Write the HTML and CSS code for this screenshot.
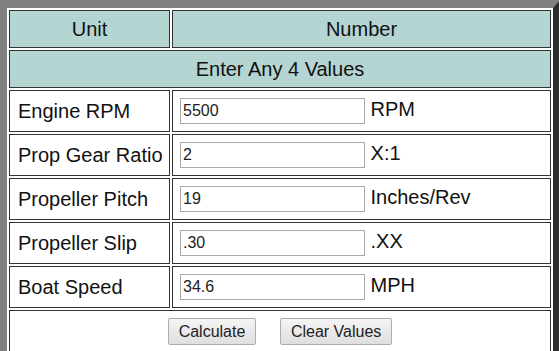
FILE: index.html
```html
<!DOCTYPE html>
<html>
  <head>
    <link rel="stylesheet" href="styles.css">
  </head>
  <body>
    <form>
      <table class="calc">
        <tr>
          <th class="head unit-col">Unit</th>
          <th class="head">Number</th>
        </tr>
        <tr>
          <td class="head" colspan="2">Enter Any 4 Values</td>
        </tr>
        <tr>
          <td class="label">Engine RPM</td>
          <td class="value"><input type="text" value="5500"> RPM</td>
        </tr>
        <tr>
          <td class="label">Prop Gear Ratio</td>
          <td class="value"><input type="text" value="2"> X:1</td>
        </tr>
        <tr>
          <td class="label">Propeller Pitch</td>
          <td class="value"><input type="text" value="19"> Inches/Rev</td>
        </tr>
        <tr>
          <td class="label">Propeller Slip</td>
          <td class="value"><input type="text" value=".30"> .XX</td>
        </tr>
        <tr>
          <td class="label">Boat Speed</td>
          <td class="value"><input type="text" value="34.6"> MPH</td>
        </tr>
        <tr>
          <td class="actions" colspan="2">
            <button type="button">Calculate</button>
            <button type="button">Clear Values</button>
          </td>
        </tr>
      </table>
    </form>
  </body>
</html>
```

FILE: styles.css
```css
html {
  overflow: hidden;
}
body {
  margin: 0;
  font-family: "Liberation Sans", Arial, sans-serif;
  background: #fff;
}
form {
  margin: 0;
}
.calc {
  width: 560px;
  border-style: solid;
  border-width: 8px 7px 7px 7px;
  border-color: #808080 #2d2d2d #2d2d2d #808080;
  border-collapse: separate;
  border-spacing: 2px;
  font-size: 20px;
  color: #111;
}
.calc td,
.calc th {
  border: 1px solid #333;
  font-weight: normal;
}
.head {
  background: #b5d5d3;
  text-align: center;
  height: 36px;
  padding: 0;
}
.unit-col {
  width: 159px;
}
.label {
  height: 40px;
  padding: 0 0 0 8px;
  white-space: nowrap;
}
.value {
  padding: 0 7px;
}
.value input {
  width: 185px;
  height: 26px;
  box-sizing: border-box;
  border: 1px solid #a9a9a9;
  padding: 0 2px;
  font-family: "Liberation Sans", Arial, sans-serif;
  font-size: 16px;
  color: #222;
  margin: 0;
}
.actions {
  text-align: center;
  padding: 7px 0 10px;
}
.actions button {
  height: 27px;
  padding: 0 10px;
  margin: 0 9px;
  font-family: "Liberation Sans", Arial, sans-serif;
  font-size: 16px;
  color: #222;
  border: 1px solid #adadad;
  border-radius: 2px;
  background: linear-gradient(#f5f5f5, #dedede);
}
```
